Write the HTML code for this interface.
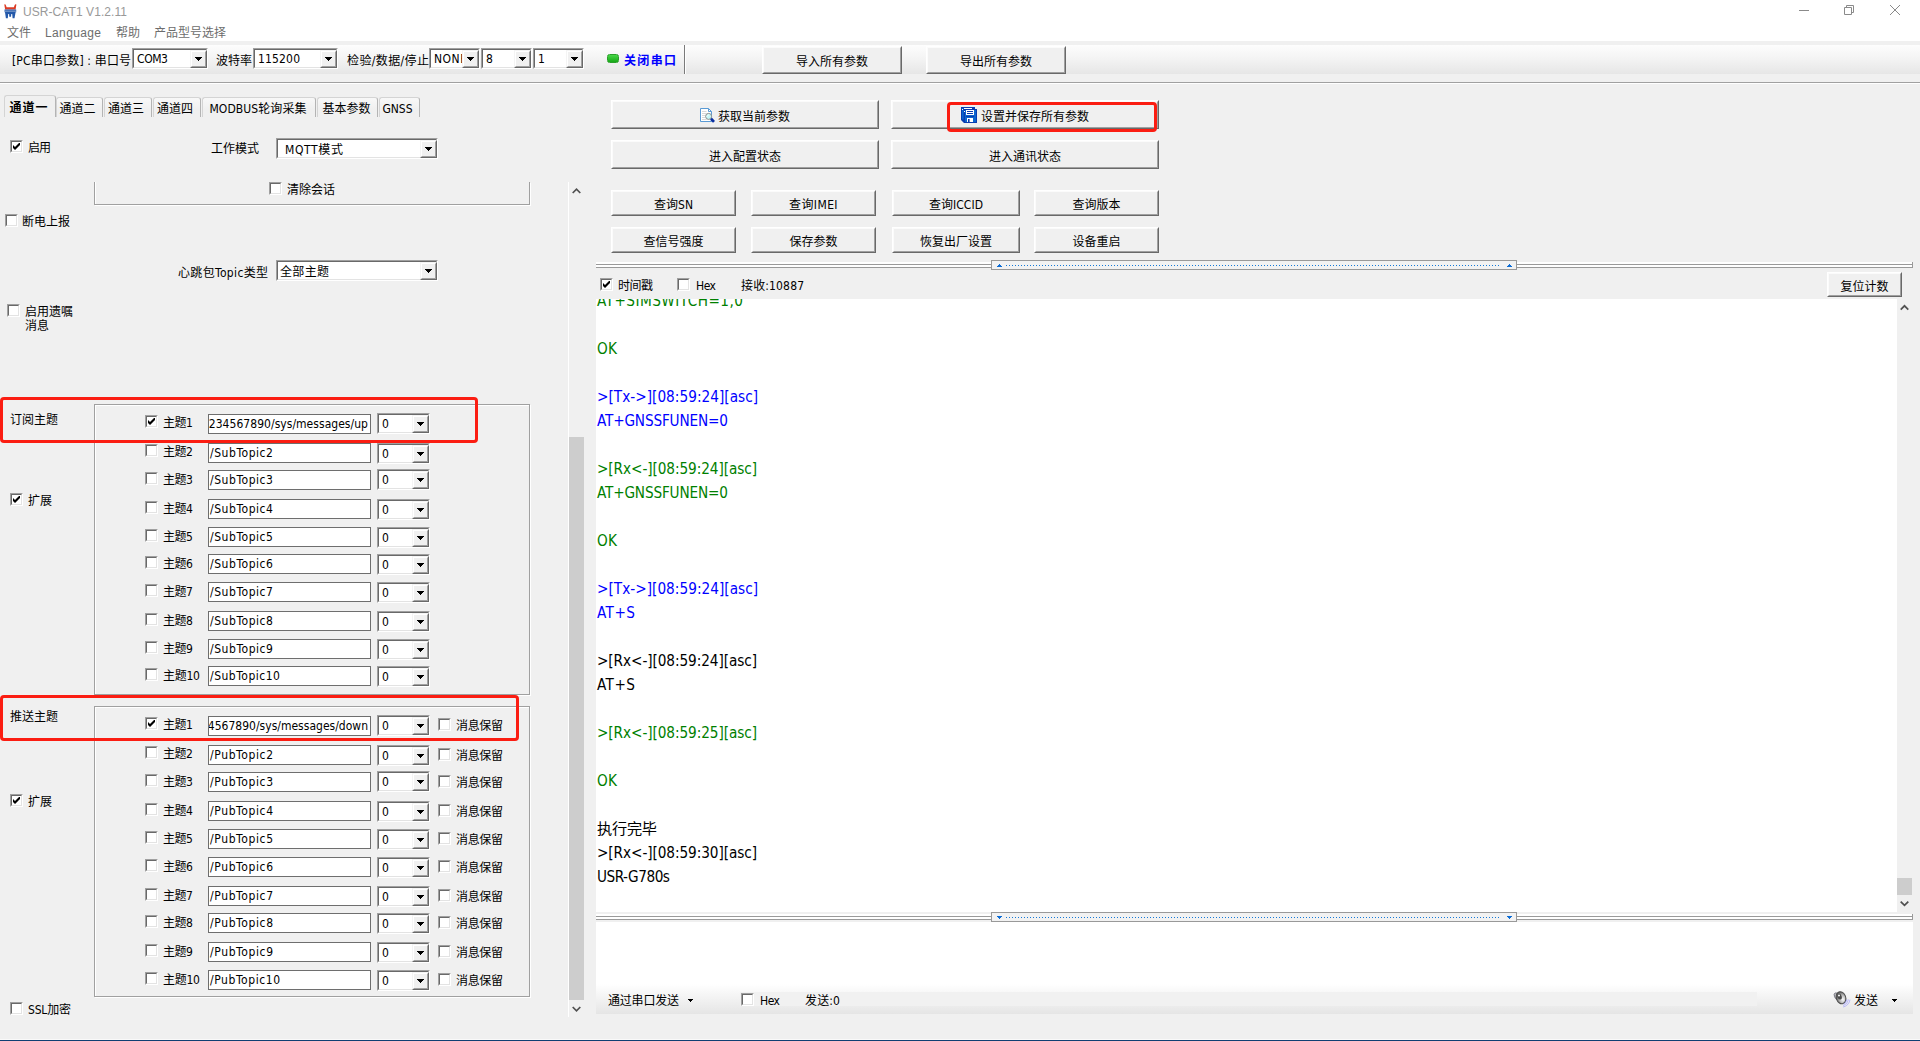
<!DOCTYPE html>
<html lang="zh-CN"><head><meta charset="utf-8"><title>USR-CAT1 V1.2.11</title>
<style>
*{box-sizing:border-box;margin:0;padding:0}
html,body{width:1920px;height:1041px;overflow:hidden;background:#f0f0f0}
body{position:relative;font-stretch:condensed;font-family:"DejaVu Sans Condensed","DejaVu Sans","Liberation Sans","Noto Sans CJK SC",sans-serif;font-size:12px;color:#000;line-height:14px}
.a{position:absolute;white-space:nowrap}
.t{position:absolute;white-space:nowrap;height:14px;line-height:14px}
.sunk{position:absolute;background:#fff;border:1px solid;border-color:#a0a0a0 #fff #fff #a0a0a0}
.sunk:before{content:"";position:absolute;left:0;top:0;right:0;bottom:0;border:1px solid;border-color:#696969 #e3e3e3 #e3e3e3 #696969}
.sunk .v,.inp .v{position:absolute;left:4px;top:3px;height:14px;line-height:14px;white-space:nowrap}
.inp{position:absolute;background:#fff;border:1px solid #6e6e6e;overflow:hidden}
.inp .v{left:1px;top:2px}
.db{position:absolute;right:0;top:1px;bottom:0;width:17px;background:#f0f0f0;border:1px solid;border-color:#f4f4f4 #696969 #696969 #f4f4f4}
.db:before{content:"";position:absolute;left:0;top:0;right:0;bottom:0;border:1px solid;border-color:#fff #a0a0a0 #a0a0a0 #fff}
.db:after{content:"";position:absolute;left:4px;top:50%;margin-top:-2px;width:7px;height:4px;background:linear-gradient(#000,#000) 0 0/7px 1px no-repeat,linear-gradient(#000,#000) 1px 1px/5px 1px no-repeat,linear-gradient(#000,#000) 2px 2px/3px 1px no-repeat,linear-gradient(#000,#000) 3px 3px/1px 1px no-repeat}
.btn{position:absolute;background:#f0f0f0;border:1px solid;border-color:#fff #696969 #696969 #fff;text-align:center;white-space:nowrap}
.btn:before{content:"";position:absolute;left:0;top:0;right:0;bottom:0;border:1px solid;border-color:#fbfbfb #a0a0a0 #a0a0a0 #fbfbfb}
.btn span{position:relative}
.cb{position:absolute;width:13px;height:13px;background:#fff;border:1px solid;border-color:#a0a0a0 #fff #fff #a0a0a0}
.cb:before{content:"";position:absolute;left:0;top:0;right:0;bottom:0;border:1px solid;border-color:#696969 #e3e3e3 #e3e3e3 #696969}
.cb svg{position:absolute;left:2px;top:2px}
.grp{position:absolute;border:1px solid #a0a0a0;box-shadow:1px 1px 0 #fff, inset 1px 1px 0 #fff}
.red{position:absolute;border:3px solid #fb1d12;border-radius:4px}
.tab{position:absolute;top:97px;height:20px;border:1px solid #d4d4d4;border-bottom:0;border-radius:3px 3px 0 0;background:linear-gradient(#f8f8f8,#f0f0f0 60%);text-align:center;line-height:23px;white-space:nowrap;border-right-color:#b4b4b4}
.tab span{position:relative;left:-1px}
.tab.sel{top:95px;height:22px;font-weight:bold;line-height:24px;background:#f0f0f0}
.log{position:absolute;left:1px;font-size:15.2px;line-height:24px;height:24px;white-space:nowrap}
.g{color:#008000}.b{color:#0000ff}.k{color:#000}
</style></head><body>

<div class="a" style="left:0;top:0;width:1920px;height:41px;background:#fff"></div>
<svg class="a" style="left:3.5px;top:3.5px" width="13" height="15" viewBox="0 0 13 15">
<path d="M0.3 0.4 Q1.6 0 2 1.4 L2.6 3.2 H9.9 L10.5 1.4 Q11 0 12.4 0.4 L11.6 5.6 H1.1 Z" fill="#dc3c24"/>
<path d="M0.5 5.5 H12.2 V8.2 H11.6 L10.5 14.3 H8.6 L8.2 10 H7.3 L7 12.8 H5.3 L5.1 10 H4.2 L3.8 14.3 H1.9 L1 8.2 H0.5 Z" fill="#2459aa"/>
<rect x="0.5" y="6.6" width="11.7" height="1.1" fill="#fff" fill-opacity="0.45"/>
</svg>
<div class="t" style="left:23px;top:5px;font-family:'Liberation Sans','Noto Sans CJK SC',sans-serif;letter-spacing:0.07px;color:#999">USR-CAT1 V1.2.11</div>
<svg class="a" style="left:1790px;top:0" width="130" height="22" viewBox="0 0 130 22" fill="none" stroke="#8a8a8a" stroke-width="1">
<path d="M9 10.5 H19"/>
<path d="M54.5 7.5 H61.5 V14.5 H54.5 Z M56.5 7.5 V5.5 H63.5 V12.5 H61.5"/>
<path d="M100 5 L110 15 M110 5 L100 15"/>
</svg>
<div class="t" style="left:7px;top:26px;font-family:'Liberation Sans','Noto Sans CJK SC',sans-serif;letter-spacing:-0.02px;color:#6d6d6d">文件</div>
<div class="t" style="left:45px;top:26px;font-family:'Liberation Sans','Noto Sans CJK SC',sans-serif;letter-spacing:0.37px;color:#6d6d6d">Language</div>
<div class="t" style="left:116px;top:26px;font-family:'Liberation Sans','Noto Sans CJK SC',sans-serif;letter-spacing:-0.02px;color:#6d6d6d">帮助</div>
<div class="t" style="left:154px;top:26px;font-family:'Liberation Sans','Noto Sans CJK SC',sans-serif;letter-spacing:-0.00px;color:#6d6d6d">产品型号选择</div>
<div class="a" style="left:0;top:45px;width:1920px;height:29px;background:linear-gradient(#fdfdfd,#f4f4f4 45%,#e6e6e6)"></div>
<div class="a" style="left:0;top:82px;width:1920px;height:1px;background:#a0a0a0"></div>
<div class="a" style="left:0;top:83px;width:1920px;height:1px;background:#fff"></div>
<div class="t" style="left:12px;top:54px;letter-spacing:0.16px;">[PC串口参数] : 串口号</div>
<div class="sunk" style="left:132px;top:48px;width:76px;height:21px"><span class="v" style="left:4px;letter-spacing:-0.41px;">COM3</span><i class="db"></i></div>
<div class="t" style="left:216px;top:54px;letter-spacing:-0.01px;">波特率</div>
<div class="sunk" style="left:253px;top:48px;width:85px;height:21px"><span class="v" style="left:4px;letter-spacing:0.16px;">115200</span><i class="db"></i></div>
<div class="t" style="left:347px;top:54px;letter-spacing:0.39px;">检验/数据/停止</div>
<div class="sunk" style="left:429px;top:48px;width:51px;height:21px"><span class="v" style="left:4px;letter-spacing:0.51px;">NONE</span><i class="db"></i></div>
<div class="sunk" style="left:481px;top:48px;width:51px;height:21px"><span class="v" style="left:4px;">8</span><i class="db"></i></div>
<div class="sunk" style="left:533px;top:48px;width:51px;height:21px"><span class="v" style="left:4px;">1</span><i class="db"></i></div>
<div class="a" style="left:607px;top:54px;width:12px;height:9px;border-radius:2.5px;background:linear-gradient(#46d746,#18a818);border:1px solid #2aa02a"></div>
<div class="t" style="left:624px;top:54px;font-weight:bold;letter-spacing:1.33px;color:#0000ff">关闭串口</div>
<div class="a" style="left:684px;top:45px;width:1px;height:29px;background:#7a7a7a"></div>
<div class="a" style="left:685px;top:45px;width:1px;height:29px;background:#fff"></div>
<div class="btn" style="left:762px;top:46px;width:140px;height:28px;line-height:30px"><span style="letter-spacing:-0.00px;">导入所有参数</span></div>
<div class="btn" style="left:926px;top:46px;width:140px;height:28px;line-height:30px"><span style="letter-spacing:-0.00px;">导出所有参数</span></div>
<div class="tab sel" style="left:4px;width:52px"><span style="letter-spacing:0.99px;">通道一</span></div>
<div class="tab" style="left:56px;width:47px"><span style="letter-spacing:-0.01px;left:-2px;">通道二</span></div>
<div class="tab" style="left:104px;width:48px"><span style="letter-spacing:-0.01px;left:-2px;">通道三</span></div>
<div class="tab" style="left:153px;width:48px"><span style="letter-spacing:-0.01px;left:-2px;">通道四</span></div>
<div class="tab" style="left:202px;width:114px"><span style="letter-spacing:0.08px;">MODBUS轮询采集</span></div>
<div class="tab" style="left:317px;width:61px"><span style="letter-spacing:-0.01px;">基本参数</span></div>
<div class="tab" style="left:379px;width:41px"><span style="letter-spacing:-0.05px;left:-2px;">GNSS</span></div>
<i class="cb" style="left:10px;top:140px"><svg width="7" height="7" viewBox="0 0 7 7"><path d="M0 2v3l2 2 5-5V-1L2 4z" fill="#000"/></svg></i>
<div class="t" style="left:28px;top:141px;letter-spacing:-1.02px;">启用</div>
<div class="t" style="left:211px;top:142px;letter-spacing:-0.01px;">工作模式</div>
<div class="sunk" style="left:276px;top:138px;width:162px;height:21px"><span class="v" style="top:4px;left:8px;letter-spacing:0.64px;">MQTT模式</span><i class="db"></i></div>
<div class="a" style="left:94px;top:182px;width:436px;height:23px;border:1px solid #a0a0a0;border-top:0;box-shadow:1px 1px 0 #fff, inset 1px 0 0 #fff"></div>
<i class="cb" style="left:269px;top:182px"></i>
<div class="t" style="left:287px;top:183px;letter-spacing:-0.01px;">清除会话</div>
<i class="cb" style="left:5px;top:214px"></i>
<div class="t" style="left:22px;top:215px;letter-spacing:-0.01px;">断电上报</div>
<div class="t" style="left:178px;top:266px;letter-spacing:0.34px;">心跳包Topic类型</div>
<div class="sunk" style="left:276px;top:260px;width:162px;height:21px"><span class="v" style="top:4px;left:3px;letter-spacing:0.33px;">全部主题</span><i class="db"></i></div>
<i class="cb" style="left:7px;top:304px"></i>
<div class="t" style="left:25px;top:305px;letter-spacing:-0.01px;">启用遗嘱</div>
<div class="t" style="left:25px;top:319px;letter-spacing:-0.02px;">消息</div>
<div class="a" style="left:568px;top:182px;width:1px;height:835px;background:#fff"></div>
<div class="a" style="left:569px;top:437px;width:15px;height:563px;background:#cdcdcd"></div>
<svg class="a" style="left:572px;top:187px" width="9" height="8" viewBox="0 0 9 8"><path d="M0.7 6 L4.5 2.2 L8.3 6" fill="none" stroke="#505050" stroke-width="1.7"/></svg>
<svg class="a" style="left:572px;top:1005px" width="9" height="8" viewBox="0 0 9 8"><path d="M0.7 2 L4.5 5.8 L8.3 2" fill="none" stroke="#505050" stroke-width="1.7"/></svg>
<div class="grp" style="left:94px;top:404px;width:436px;height:291px"></div>
<div class="t" style="left:10px;top:413px;letter-spacing:-0.01px;">订阅主题</div>
<i class="cb" style="left:145px;top:415px"><svg width="7" height="7" viewBox="0 0 7 7"><path d="M0 2v3l2 2 5-5V-1L2 4z" fill="#000"/></svg></i>
<div class="t" style="left:163px;top:416px;letter-spacing:-0.44px;">主题1</div>
<div class="inp" style="left:208px;top:414px;width:163px;height:20px"><span class="v" style="left:auto;right:2px;letter-spacing:0.04px;">1234567890/sys/messages/up</span></div>
<div class="sunk" style="left:377px;top:413px;width:53px;height:21px"><span class="v" style="left:4px;">0</span><i class="db"></i></div>
<i class="cb" style="left:145px;top:444px"></i>
<div class="t" style="left:163px;top:445px;letter-spacing:-0.44px;">主题2</div>
<div class="inp" style="left:208px;top:443px;width:163px;height:20px"><span class="v" style="letter-spacing:0.55px;">/SubTopic2</span></div>
<div class="sunk" style="left:377px;top:443px;width:53px;height:21px"><span class="v" style="left:4px;">0</span><i class="db"></i></div>
<i class="cb" style="left:145px;top:472px"></i>
<div class="t" style="left:163px;top:473px;letter-spacing:-0.44px;">主题3</div>
<div class="inp" style="left:208px;top:470px;width:163px;height:20px"><span class="v" style="letter-spacing:0.55px;">/SubTopic3</span></div>
<div class="sunk" style="left:377px;top:469px;width:53px;height:21px"><span class="v" style="left:4px;">0</span><i class="db"></i></div>
<i class="cb" style="left:145px;top:501px"></i>
<div class="t" style="left:163px;top:502px;letter-spacing:-0.44px;">主题4</div>
<div class="inp" style="left:208px;top:499px;width:163px;height:20px"><span class="v" style="letter-spacing:0.55px;">/SubTopic4</span></div>
<div class="sunk" style="left:377px;top:499px;width:53px;height:21px"><span class="v" style="left:4px;">0</span><i class="db"></i></div>
<i class="cb" style="left:145px;top:529px"></i>
<div class="t" style="left:163px;top:530px;letter-spacing:-0.44px;">主题5</div>
<div class="inp" style="left:208px;top:527px;width:163px;height:20px"><span class="v" style="letter-spacing:0.55px;">/SubTopic5</span></div>
<div class="sunk" style="left:377px;top:527px;width:53px;height:21px"><span class="v" style="left:4px;">0</span><i class="db"></i></div>
<i class="cb" style="left:145px;top:556px"></i>
<div class="t" style="left:163px;top:557px;letter-spacing:-0.44px;">主题6</div>
<div class="inp" style="left:208px;top:554px;width:163px;height:20px"><span class="v" style="letter-spacing:0.55px;">/SubTopic6</span></div>
<div class="sunk" style="left:377px;top:554px;width:53px;height:21px"><span class="v" style="left:4px;">0</span><i class="db"></i></div>
<i class="cb" style="left:145px;top:584px"></i>
<div class="t" style="left:163px;top:585px;letter-spacing:-0.44px;">主题7</div>
<div class="inp" style="left:208px;top:582px;width:163px;height:20px"><span class="v" style="letter-spacing:0.55px;">/SubTopic7</span></div>
<div class="sunk" style="left:377px;top:582px;width:53px;height:21px"><span class="v" style="left:4px;">0</span><i class="db"></i></div>
<i class="cb" style="left:145px;top:613px"></i>
<div class="t" style="left:163px;top:614px;letter-spacing:-0.44px;">主题8</div>
<div class="inp" style="left:208px;top:611px;width:163px;height:20px"><span class="v" style="letter-spacing:0.55px;">/SubTopic8</span></div>
<div class="sunk" style="left:377px;top:611px;width:53px;height:21px"><span class="v" style="left:4px;">0</span><i class="db"></i></div>
<i class="cb" style="left:145px;top:641px"></i>
<div class="t" style="left:163px;top:642px;letter-spacing:-0.44px;">主题9</div>
<div class="inp" style="left:208px;top:639px;width:163px;height:20px"><span class="v" style="letter-spacing:0.55px;">/SubTopic9</span></div>
<div class="sunk" style="left:377px;top:639px;width:53px;height:21px"><span class="v" style="left:4px;">0</span><i class="db"></i></div>
<i class="cb" style="left:145px;top:668px"></i>
<div class="t" style="left:163px;top:669px;letter-spacing:-0.25px;">主题10</div>
<div class="inp" style="left:208px;top:666px;width:163px;height:20px"><span class="v" style="letter-spacing:0.51px;">/SubTopic10</span></div>
<div class="sunk" style="left:377px;top:666px;width:53px;height:21px"><span class="v" style="left:4px;">0</span><i class="db"></i></div>
<i class="cb" style="left:10px;top:493px"><svg width="7" height="7" viewBox="0 0 7 7"><path d="M0 2v3l2 2 5-5V-1L2 4z" fill="#000"/></svg></i>
<div class="t" style="left:28px;top:494px;letter-spacing:-0.02px;">扩展</div>
<div class="red" style="left:0;top:397px;width:478px;height:46px"></div>
<div class="grp" style="left:94px;top:706px;width:436px;height:291px"></div>
<div class="t" style="left:10px;top:710px;letter-spacing:-0.01px;">推送主题</div>
<i class="cb" style="left:145px;top:717px"><svg width="7" height="7" viewBox="0 0 7 7"><path d="M0 2v3l2 2 5-5V-1L2 4z" fill="#000"/></svg></i>
<div class="t" style="left:163px;top:718px;letter-spacing:-0.44px;">主题1</div>
<div class="inp" style="left:208px;top:716px;width:163px;height:20px"><span class="v" style="left:auto;right:2px;letter-spacing:0.01px;">234567890/sys/messages/down</span></div>
<div class="sunk" style="left:377px;top:715px;width:53px;height:21px"><span class="v" style="left:4px;">0</span><i class="db"></i></div>
<i class="cb" style="left:438px;top:718px"></i>
<div class="t" style="left:456px;top:719px;letter-spacing:-0.34px;">消息保留</div>
<i class="cb" style="left:145px;top:746px"></i>
<div class="t" style="left:163px;top:747px;letter-spacing:-0.44px;">主题2</div>
<div class="inp" style="left:208px;top:745px;width:163px;height:20px"><span class="v" style="letter-spacing:0.62px;">/PubTopic2</span></div>
<div class="sunk" style="left:377px;top:745px;width:53px;height:21px"><span class="v" style="left:4px;">0</span><i class="db"></i></div>
<i class="cb" style="left:438px;top:748px"></i>
<div class="t" style="left:456px;top:749px;letter-spacing:-0.34px;">消息保留</div>
<i class="cb" style="left:145px;top:774px"></i>
<div class="t" style="left:163px;top:775px;letter-spacing:-0.44px;">主题3</div>
<div class="inp" style="left:208px;top:772px;width:163px;height:20px"><span class="v" style="letter-spacing:0.62px;">/PubTopic3</span></div>
<div class="sunk" style="left:377px;top:771px;width:53px;height:21px"><span class="v" style="left:4px;">0</span><i class="db"></i></div>
<i class="cb" style="left:438px;top:775px"></i>
<div class="t" style="left:456px;top:776px;letter-spacing:-0.34px;">消息保留</div>
<i class="cb" style="left:145px;top:803px"></i>
<div class="t" style="left:163px;top:804px;letter-spacing:-0.44px;">主题4</div>
<div class="inp" style="left:208px;top:801px;width:163px;height:20px"><span class="v" style="letter-spacing:0.62px;">/PubTopic4</span></div>
<div class="sunk" style="left:377px;top:801px;width:53px;height:21px"><span class="v" style="left:4px;">0</span><i class="db"></i></div>
<i class="cb" style="left:438px;top:804px"></i>
<div class="t" style="left:456px;top:805px;letter-spacing:-0.34px;">消息保留</div>
<i class="cb" style="left:145px;top:831px"></i>
<div class="t" style="left:163px;top:832px;letter-spacing:-0.44px;">主题5</div>
<div class="inp" style="left:208px;top:829px;width:163px;height:20px"><span class="v" style="letter-spacing:0.62px;">/PubTopic5</span></div>
<div class="sunk" style="left:377px;top:829px;width:53px;height:21px"><span class="v" style="left:4px;">0</span><i class="db"></i></div>
<i class="cb" style="left:438px;top:832px"></i>
<div class="t" style="left:456px;top:833px;letter-spacing:-0.34px;">消息保留</div>
<i class="cb" style="left:145px;top:859px"></i>
<div class="t" style="left:163px;top:860px;letter-spacing:-0.44px;">主题6</div>
<div class="inp" style="left:208px;top:857px;width:163px;height:20px"><span class="v" style="letter-spacing:0.62px;">/PubTopic6</span></div>
<div class="sunk" style="left:377px;top:857px;width:53px;height:21px"><span class="v" style="left:4px;">0</span><i class="db"></i></div>
<i class="cb" style="left:438px;top:860px"></i>
<div class="t" style="left:456px;top:861px;letter-spacing:-0.34px;">消息保留</div>
<i class="cb" style="left:145px;top:888px"></i>
<div class="t" style="left:163px;top:889px;letter-spacing:-0.44px;">主题7</div>
<div class="inp" style="left:208px;top:886px;width:163px;height:20px"><span class="v" style="letter-spacing:0.62px;">/PubTopic7</span></div>
<div class="sunk" style="left:377px;top:886px;width:53px;height:21px"><span class="v" style="left:4px;">0</span><i class="db"></i></div>
<i class="cb" style="left:438px;top:889px"></i>
<div class="t" style="left:456px;top:890px;letter-spacing:-0.34px;">消息保留</div>
<i class="cb" style="left:145px;top:915px"></i>
<div class="t" style="left:163px;top:916px;letter-spacing:-0.44px;">主题8</div>
<div class="inp" style="left:208px;top:913px;width:163px;height:20px"><span class="v" style="letter-spacing:0.62px;">/PubTopic8</span></div>
<div class="sunk" style="left:377px;top:913px;width:53px;height:21px"><span class="v" style="left:4px;">0</span><i class="db"></i></div>
<i class="cb" style="left:438px;top:916px"></i>
<div class="t" style="left:456px;top:917px;letter-spacing:-0.34px;">消息保留</div>
<i class="cb" style="left:145px;top:944px"></i>
<div class="t" style="left:163px;top:945px;letter-spacing:-0.44px;">主题9</div>
<div class="inp" style="left:208px;top:942px;width:163px;height:20px"><span class="v" style="letter-spacing:0.62px;">/PubTopic9</span></div>
<div class="sunk" style="left:377px;top:942px;width:53px;height:21px"><span class="v" style="left:4px;">0</span><i class="db"></i></div>
<i class="cb" style="left:438px;top:945px"></i>
<div class="t" style="left:456px;top:946px;letter-spacing:-0.34px;">消息保留</div>
<i class="cb" style="left:145px;top:972px"></i>
<div class="t" style="left:163px;top:973px;letter-spacing:-0.25px;">主题10</div>
<div class="inp" style="left:208px;top:970px;width:163px;height:20px"><span class="v" style="letter-spacing:0.57px;">/PubTopic10</span></div>
<div class="sunk" style="left:377px;top:970px;width:53px;height:21px"><span class="v" style="left:4px;">0</span><i class="db"></i></div>
<i class="cb" style="left:438px;top:973px"></i>
<div class="t" style="left:456px;top:974px;letter-spacing:-0.34px;">消息保留</div>
<i class="cb" style="left:10px;top:794px"><svg width="7" height="7" viewBox="0 0 7 7"><path d="M0 2v3l2 2 5-5V-1L2 4z" fill="#000"/></svg></i>
<div class="t" style="left:28px;top:795px;letter-spacing:-0.02px;">扩展</div>
<div class="red" style="left:0;top:695px;width:519px;height:46px"></div>
<i class="cb" style="left:10px;top:1002px"></i>
<div class="t" style="left:28px;top:1003px;letter-spacing:-0.18px;">SSL加密</div>
<div class="btn" style="left:611px;top:100px;width:268px;height:29px;line-height:29px"><svg style="position:absolute;left:87px;top:6px" width="17" height="17" viewBox="0 0 17 17"><path d="M1.5 1.5 H9.5 L12.5 4.5 V14.5 H1.5 Z" fill="#fff" stroke="#5b9bd5"/><path d="M9.5 1.5 V4.5 H12.5" fill="none" stroke="#5b9bd5"/><path d="M3 4.5 H7.5 M3 6.5 H7.5 M3 8.5 H6 M3 10.5 H6 M3 12.5 H7.5" stroke="#d9d9d9"/><circle cx="9.6" cy="9.4" r="3" fill="#c6f6f6" stroke="#8c8c8c"/><path d="M7.8 9.6 L9.8 7.6" stroke="#fff" stroke-width="1"/><path d="M12 11.8 L15 14.9" stroke="#0a2fa0" stroke-width="2.8"/></svg><span style="letter-spacing:-0.00px;position:absolute;left:106px;top:2px;">获取当前参数</span></div>
<div class="btn" style="left:891px;top:100px;width:268px;height:29px;line-height:29px"><svg style="position:absolute;left:69px;top:6px" width="16" height="16" viewBox="0 0 16 16"><path d="M0 0 H14 V2 H16 V16 H3 L0 13 Z" fill="#0a3bb0"/><rect x="4" y="3" width="11" height="12" fill="#0b65cf"/><rect x="1" y="1" width="1.6" height="11.5" fill="#0b65cf"/><rect x="3" y="1" width="8" height="1" fill="#fff"/><rect x="5" y="3" width="8" height="5" fill="#fff"/><path d="M6 4.5 H12 M6 6.5 H12" stroke="#0a3bb0"/><path d="M5 9.5 H13" stroke="#0a3bb0"/><rect x="6" y="11" width="6" height="4" fill="#fff"/><rect x="7" y="12" width="1.6" height="3" fill="#0a3bb0"/><rect x="1" y="2" width="1" height="1" fill="#fff"/><rect x="3" y="4" width="1" height="1" fill="#fff"/></svg><span style="letter-spacing:-0.00px;position:absolute;left:89px;top:2px;">设置并保存所有参数</span></div>
<div class="red" style="left:947px;top:102px;width:210px;height:30px"></div>
<div class="btn" style="left:611px;top:140px;width:268px;height:29px;line-height:33px"><span style="letter-spacing:-0.00px;">进入配置状态</span></div>
<div class="btn" style="left:891px;top:140px;width:268px;height:29px;line-height:33px"><span style="letter-spacing:-0.00px;">进入通讯状态</span></div>
<div class="btn" style="left:611px;top:190px;width:125px;height:26px;line-height:29px"><span style="letter-spacing:0.02px;">查询SN</span></div>
<div class="btn" style="left:751px;top:190px;width:125px;height:26px;line-height:29px"><span style="letter-spacing:0.40px;">查询IMEI</span></div>
<div class="btn" style="left:892px;top:190px;width:128px;height:26px;line-height:29px"><span style="letter-spacing:0.04px;">查询ICCID</span></div>
<div class="btn" style="left:1034px;top:190px;width:125px;height:26px;line-height:29px"><span style="letter-spacing:-0.01px;">查询版本</span></div>
<div class="btn" style="left:611px;top:227px;width:125px;height:26px;line-height:29px"><span style="letter-spacing:-0.00px;">查信号强度</span></div>
<div class="btn" style="left:751px;top:227px;width:125px;height:26px;line-height:29px"><span style="letter-spacing:-0.01px;">保存参数</span></div>
<div class="btn" style="left:892px;top:227px;width:128px;height:26px;line-height:29px"><span style="letter-spacing:-0.00px;">恢复出厂设置</span></div>
<div class="btn" style="left:1034px;top:227px;width:125px;height:26px;line-height:29px"><span style="letter-spacing:-0.01px;">设备重启</span></div>
<div class="a" style="left:596px;top:262px;width:1317px;height:6px;background:linear-gradient(#fff 0 2px,#9a9a9a 2px 3px,#fff 3px 5px,#9a9a9a 5px 6px);border-right:1px solid #9a9a9a"></div>
<div class="a" style="left:991px;top:260px;width:526px;height:10px;background:#f2f2f2;border:1px solid #999"></div>
<div class="a" style="left:1006px;top:265px;width:493px;height:1px;background:repeating-linear-gradient(90deg,#1479d8 0 1px,transparent 1px 3px)"></div>
<div class="a" style="left:997px;top:264px;width:5px;height:3px;background:linear-gradient(#0b6cd6,#0b6cd6) 2px 0/1px 1px no-repeat,linear-gradient(#0b6cd6,#0b6cd6) 1px 1px/3px 1px no-repeat,linear-gradient(#0b6cd6,#0b6cd6) 0 2px/5px 1px no-repeat"></div>
<div class="a" style="left:1507px;top:264px;width:5px;height:3px;background:linear-gradient(#0b6cd6,#0b6cd6) 2px 0/1px 1px no-repeat,linear-gradient(#0b6cd6,#0b6cd6) 1px 1px/3px 1px no-repeat,linear-gradient(#0b6cd6,#0b6cd6) 0 2px/5px 1px no-repeat"></div>
<i class="cb" style="left:600px;top:278px"><svg width="7" height="7" viewBox="0 0 7 7"><path d="M0 2v3l2 2 5-5V-1L2 4z" fill="#000"/></svg></i>
<div class="t" style="left:618px;top:279px;letter-spacing:-0.51px;">时间戳</div>
<i class="cb" style="left:677px;top:278px"></i>
<div class="t" style="left:696px;top:279px;letter-spacing:-0.48px;">Hex</div>
<div class="t" style="left:741px;top:279px;letter-spacing:0.15px;">接收:10887</div>
<div class="btn" style="left:1827px;top:272px;width:75px;height:25px;line-height:28px"><span style="letter-spacing:-0.01px;">复位计数</span></div>
<div class="a" style="left:596px;top:299px;width:1301px;height:613px;background:#fff"></div>
<div class="a" style="left:1897px;top:878px;width:15px;height:17px;background:#cdcdcd"></div>
<svg class="a" style="left:1900px;top:303px" width="9" height="8" viewBox="0 0 9 8"><path d="M0.7 6.6 L4.5 2.8 L8.3 6.6" fill="none" stroke="#505050" stroke-width="1.7"/></svg>
<svg class="a" style="left:1900px;top:900px" width="9" height="8" viewBox="0 0 9 8"><path d="M0.7 1.6 L4.5 5.4 L8.3 1.6" fill="none" stroke="#505050" stroke-width="1.7"/></svg>
<div class="a" style="left:596px;top:299px;width:1301px;height:613px;overflow:hidden">
<div class="log g" style="top:-10px;letter-spacing:0.46px;">AT+SIMSWITCH=1,0</div>
<div class="log g" style="top:38px;letter-spacing:0.28px;">OK</div>
<div class="log b" style="top:86px;letter-spacing:0.02px;">&gt;[Tx-&gt;][08:59:24][asc]</div>
<div class="log b" style="top:110px;letter-spacing:-0.17px;">AT+GNSSFUNEN=0</div>
<div class="log g" style="top:158px;letter-spacing:-0.08px;">&gt;[Rx&lt;-][08:59:24][asc]</div>
<div class="log g" style="top:182px;letter-spacing:-0.17px;">AT+GNSSFUNEN=0</div>
<div class="log g" style="top:230px;letter-spacing:0.28px;">OK</div>
<div class="log b" style="top:278px;letter-spacing:0.02px;">&gt;[Tx-&gt;][08:59:24][asc]</div>
<div class="log b" style="top:302px;letter-spacing:0.45px;">AT+S</div>
<div class="log k" style="top:350px;letter-spacing:-0.08px;">&gt;[Rx&lt;-][08:59:24][asc]</div>
<div class="log k" style="top:374px;letter-spacing:0.45px;">AT+S</div>
<div class="log g" style="top:422px;letter-spacing:-0.08px;">&gt;[Rx&lt;-][08:59:25][asc]</div>
<div class="log g" style="top:470px;letter-spacing:0.28px;">OK</div>
<div class="log k" style="top:518px;letter-spacing:-0.25px;">执行完毕</div>
<div class="log k" style="top:542px;letter-spacing:-0.08px;">&gt;[Rx&lt;-][08:59:30][asc]</div>
<div class="log k" style="top:566px;letter-spacing:-0.48px;">USR-G780s</div>
</div>
<div class="a" style="left:596px;top:914px;width:1317px;height:6px;background:linear-gradient(#fff 0 2px,#9a9a9a 2px 3px,#fff 3px 5px,#9a9a9a 5px 6px);border-right:1px solid #9a9a9a"></div>
<div class="a" style="left:991px;top:912px;width:526px;height:10px;background:#f2f2f2;border:1px solid #999"></div>
<div class="a" style="left:1006px;top:917px;width:493px;height:1px;background:repeating-linear-gradient(90deg,#1479d8 0 1px,transparent 1px 3px)"></div>
<div class="a" style="left:997px;top:916px;width:5px;height:3px;background:linear-gradient(#0b6cd6,#0b6cd6) 0 0/5px 1px no-repeat,linear-gradient(#0b6cd6,#0b6cd6) 1px 1px/3px 1px no-repeat,linear-gradient(#0b6cd6,#0b6cd6) 2px 2px/1px 1px no-repeat"></div>
<div class="a" style="left:1507px;top:916px;width:5px;height:3px;background:linear-gradient(#0b6cd6,#0b6cd6) 0 0/5px 1px no-repeat,linear-gradient(#0b6cd6,#0b6cd6) 1px 1px/3px 1px no-repeat,linear-gradient(#0b6cd6,#0b6cd6) 2px 2px/1px 1px no-repeat"></div>
<div class="a" style="left:596px;top:922px;width:1317px;height:70px;background:#fff"></div>
<div class="a" style="left:596px;top:984px;width:1317px;height:30px;background:linear-gradient(#fff,#f7f7f7 30%,#eee 65%,#e5e5e5)"></div>
<div class="a" style="left:740px;top:992px;width:1017px;height:14px;background:#f1f1f1"></div>
<div class="t" style="left:608px;top:994px;letter-spacing:-0.20px;">通过串口发送</div>
<div class="a" style="left:688px;top:999px;width:5px;height:3px;background:linear-gradient(#000,#000) 0 0/5px 1px no-repeat,linear-gradient(#000,#000) 1px 1px/3px 1px no-repeat,linear-gradient(#000,#000) 2px 2px/1px 1px no-repeat"></div>
<i class="cb" style="left:741px;top:993px"></i>
<div class="t" style="left:760px;top:994px;letter-spacing:-0.48px;">Hex</div>
<div class="t" style="left:805px;top:994px;letter-spacing:0.16px;">发送:0</div>
<svg class="a" style="left:1833px;top:990px" width="19" height="18" viewBox="0 0 19 18"><defs><radialGradient id="spk" cx="0.62" cy="0.68" r="0.65"><stop offset="0" stop-color="#fdfdfd"/><stop offset="0.55" stop-color="#b5b5b5"/><stop offset="1" stop-color="#5a5a5a"/></radialGradient></defs><ellipse cx="3.4" cy="6" rx="2" ry="3.3" transform="rotate(-20 3.4 6)" fill="#c4c4c8" stroke="#6a6a78" stroke-width="0.8"/><ellipse cx="8" cy="7.7" rx="4.7" ry="6.2" transform="rotate(-20 8 7.7)" fill="url(#spk)" stroke="#4c4c4c"/><ellipse cx="6.6" cy="6.7" rx="2.1" ry="2.9" transform="rotate(-20 6.6 6.7)" fill="#4a4a4a"/><circle cx="6" cy="5.6" r="1" fill="#fff"/><path d="M10.4 14.2 Q13.2 12.9 14 9.4 M10.3 15.6 Q14.6 14.1 15.5 9.5 M10.1 17 Q16 15.4 17 9.7" fill="none" stroke="#9494ff" stroke-width="0.6"/></svg>
<div class="t" style="left:1854px;top:994px;letter-spacing:-0.02px;">发送</div>
<div class="a" style="left:1892px;top:999px;width:5px;height:3px;background:linear-gradient(#000,#000) 0 0/5px 1px no-repeat,linear-gradient(#000,#000) 1px 1px/3px 1px no-repeat,linear-gradient(#000,#000) 2px 2px/1px 1px no-repeat"></div>
<div class="a" style="left:0;top:1039px;width:1920px;height:1px;background:#fafafa"></div><div class="a" style="left:0;top:1040px;width:1920px;height:1px;background:#103f73"></div>
</body></html>
